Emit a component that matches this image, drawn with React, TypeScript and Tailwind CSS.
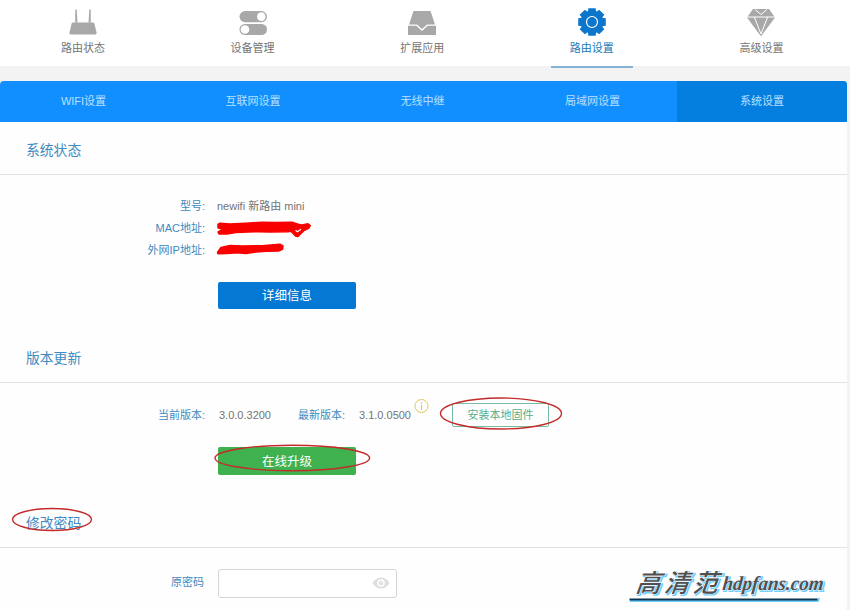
import type { ReactNode } from "react";
import clsx from "clsx";

const mainMenu = [
  { label: "路由状态", icon: <RouterIcon /> },
  { label: "设备管理", icon: <DevicesIcon /> },
  { label: "扩展应用", icon: <AppsIcon /> },
  { label: "路由设置", icon: <GearIcon />, active: true },
  { label: "高级设置", icon: <DiamondIcon /> },
];

const tabs = ["WIFI设置", "互联网设置", "无线中继", "局域网设置", "系统设置"];

function RouterIcon() {
  return (
    <svg width="30" height="30" viewBox="0 0 30 30" fill="#a8a8a8">
      <path d="M7.300 2.500h1.400l.8 13H7.200zM21.300 2.500h1.400l.1 13h-2.300z" />
      <path d="M5 15.500h20q1 0 1.300 1.100l2.300 9.200q.3 1.700-1.400 1.700H2.800q-1.700 0-1.400-1.700l2.300-9.200Q4 15.500 5 15.500z" />
    </svg>
  );
}

function DevicesIcon() {
  return (
    <svg width="30" height="30" viewBox="0 0 30 30" fill="#a8a8a8">
      <rect x="1.5" y="4" width="27.5" height="11.200" rx="5.600" />
      <rect x="1.5" y="17" width="27.5" height="11" rx="5.500" />
      <circle cx="23.300" cy="9.600" r="4.300" fill="#fff" />
      <circle cx="7" cy="22.500" r="4.300" fill="#fff" />
    </svg>
  );
}

function AppsIcon() {
  return (
    <svg width="30" height="30" viewBox="0 0 30 30" fill="#a8a8a8">
      <path d="M6.500 4h17l4.500 13.500h-8L15 22l-5-4.500H2z" />
      <path d="M1 18.800h8.300l5.700 5.200 5.700-5.200H29v9.200H1z" />
    </svg>
  );
}

function GearIcon() {
  return (
    <svg width="30" height="30" viewBox="0 0 30 30" fill="#0c76cc">
      <circle cx="15" cy="15" r="11.400" />
      {[0, 45, 90, 135, 180, 225, 270, 315].map((angle) => (
        <path key={angle} d="M11.300 1.200h7.400l.5 5h-8.400z" transform={`rotate(${angle} 15 15)`} />
      ))}
      <circle cx="15" cy="15" r="5.500" fill="none" stroke="#fff" strokeWidth="1.200" />
    </svg>
  );
}

function DiamondIcon() {
  return (
    <svg width="30" height="30" viewBox="0 0 30 30">
      <path d="M7 2h16l6 8.500-13.200 17.800q-.8 1-1.600 0L1 10.500z" fill="#a8a8a8" />
      <path
        d="M1 10h28M9 2.500l6 5 6-5M8.300 10l6.700 17 6.700-17"
        fill="none"
        stroke="#fff"
        strokeWidth="1"
      />
    </svg>
  );
}

function EyeIcon() {
  return (
    <svg className="mb-px" width="18" height="12" viewBox="0 0 18 12">
      <path d="M.5 6Q4 .5 9 .5T17.500 6Q14 11.500 9 11.500T.5 6z" fill="#dedede" />
      <circle cx="9" cy="6" r="3.800" fill="#fff" />
      <circle cx="9" cy="6" r="2.300" fill="#dedede" />
      <circle cx="9.500" cy="5.500" r=".8" fill="#fff" />
    </svg>
  );
}

function SectionTitle({ children }: { children: ReactNode }) {
  return (
    <h2 className="h-[53px] border-b border-[#e2e2e2] pl-[26px] text-[13.8px] leading-[58px] text-[#3f8abf]">
      {children}
    </h2>
  );
}

function Row({ label, children }: { label: string; children?: ReactNode }) {
  return (
    <div className="flex h-[22px] items-center">
      <span className="w-[205px] text-right text-[#3f8abf]">{label}</span>
      <span className="ml-3">{children}</span>
    </div>
  );
}

// Hand-drawn marks that sit on top of the page
function Marks() {
  return (
    <svg className="pointer-events-none absolute left-0 top-0" width="850" height="610" fill="none">
      <g fill="#f90000" stroke="#f90000" strokeLinejoin="round">
        <path
          d="M218 224.500l2-1.300 10 .8 20-1 12-.8 14 .3 16-.3 7 2.300 3 .6 6-1.300 2.300 1.700-1.300 2.500-5 2.500-6 6-2.500-.6-4.500-4.700-3 .5-18 .3-12-.3-10 .3-12 .5-9 1.500h-8l-1-2 4-2.700-4-1.500z"
          strokeWidth="1.500"
        />
        <path
          d="M217.500 252.500l3.500-5 9-2 12 .5 20-.3 12-1 6-.5 3 1.700-.5 3.500-3.500 1.500-13 .3-10 .7-10 1.600-9-.8-10 .9-9 .1z"
          strokeWidth="1.500"
        />
      </g>
      <path d="M295.500 230.300l2 1.500 3.500-2.500" stroke="#fff" strokeWidth="1.200" />
      <g stroke="#c42a2a" strokeWidth="1.400">
        <ellipse cx="292.300" cy="458" rx="77.300" ry="12.800" />
        <ellipse cx="501" cy="413.500" rx="60.500" ry="15.500" />
        <ellipse cx="52" cy="519.500" rx="39.500" ry="11" />
      </g>
    </svg>
  );
}

function WatermarkText() {
  return (
    <>
      <text
        transform="translate(15 41.500) skewX(-20)"
        fontSize="25"
        textLength="82"
        fontWeight="500"
        fontFamily="'Noto Sans CJK SC', sans-serif"
      >
        高清范
      </text>
      <text
        transform="translate(102 39.500) skewX(-6)"
        fontSize="20"
        textLength="101"
        lengthAdjust="spacingAndGlyphs"
        fontStyle="italic"
        fontWeight="700"
        fontFamily="'Liberation Serif', serif"
      >
        hdpfans.com
      </text>
    </>
  );
}

function Watermark() {
  return (
    <svg className="pointer-events-none absolute left-[620px] top-[550px] overflow-visible" width="225" height="60">
      <g fill="#6fd0ff" stroke="#6fd0ff" strokeWidth="1.800" strokeLinejoin="round" transform="translate(1.200 1.200)" aria-hidden="true">
        <WatermarkText />
      </g>
      <g fill="#505050" stroke="#fff" strokeWidth="1" paintOrder="stroke">
        <WatermarkText />
      </g>
      <path d="M10 51h188l1-3" fill="none" stroke="#6fd0ff" strokeWidth="2" />
      <path d="M9.500 49.500h188" stroke="#0b3550" strokeWidth="2" />
    </svg>
  );
}

export default function App() {
  return (
    <div className="relative h-[610px] w-[850px] overflow-hidden bg-[#f3f3f3] font-['Liberation_Sans','Noto_Sans_CJK_SC',sans-serif] text-[11px] text-[#747474]">
      <nav className="h-[66px] bg-white">
        <div className="grid w-[848px] grid-cols-5">
          {mainMenu.map((item) => (
            <a
              key={item.label}
              className={clsx("flex h-[68px] w-[166px] flex-col items-center pt-[7px]", item.active && "text-[#2276b4]")}
            >
              {item.icon}
              <span className="mt-[3px] leading-4">{item.label}</span>
              {item.active && <span className="mt-auto h-[2px] w-[82px] bg-[#83b4d5]" />}
            </a>
          ))}
        </div>
      </nav>

      <div className="mt-[15px] grid h-[41px] w-[847px] grid-cols-[169px_170px_169px_169px_170px] overflow-hidden rounded-t-[4px] bg-[#118fff] text-center leading-[41px] text-[#b9e0ff]">
        {tabs.map((tab, i) => (
          <a key={tab} className={clsx(i < 3 && "pr-[2px]", i === 4 && "bg-[#047fe0]")}>
            {tab}
          </a>
        ))}
      </div>

      <main className="h-[488px] w-[847px] bg-[#fefefe]">
        <section className="h-[208px]">
          <SectionTitle>系统状态</SectionTitle>
          <div className="pt-5">
            <Row label="型号:">newifi 新路由 mini</Row>
            <Row label="MAC地址:" />
            <Row label="外网IP地址:" />
          </div>
          <button className="ml-[218px] mt-[21px] block h-[27px] w-[138px] rounded-[2px] bg-[#0478d2] pt-[2px] text-[12.5px] leading-[25px] text-white">
            详细信息
          </button>
        </section>

        <section className="h-[165px]">
          <SectionTitle>版本更新</SectionTitle>
          <div className="flex h-[64px] items-center">
            <span className="w-[205px] text-right text-[#3f8abf]">当前版本:</span>
            <span className="ml-[14px] w-[79px]">3.0.0.3200</span>
            <span className="w-[61px] text-[#3f8abf]">最新版本:</span>
            <span>3.1.0.0500</span>
            <svg className="-mt-[18px] ml-[3px]" width="15" height="15" fill="none" stroke="#e4c65a">
              <circle cx="7.500" cy="7" r="6.500" />
              <path d="M7.500 6v5M7.500 3.300v1.500" strokeWidth="1.200" />
            </svg>
            <button className="ml-[23px] h-[24px] w-[97px] rounded-[2px] border border-[#78bda4] text-[#54ae8c]">
              安装本地固件
            </button>
          </div>
          <button className="ml-[218px] block h-[28px] w-[138px] rounded-[2px] bg-[#3fb24f] pt-[2px] text-[12.5px] leading-[26px] text-white">
            在线升级
          </button>
        </section>

        <section>
          <SectionTitle>修改密码</SectionTitle>
          <label className="mt-[21px] flex items-center">
            <span className="w-[204px] pb-[2px] text-right text-[#3f8abf]">原密码</span>
            <span className="ml-[14px] flex h-[29px] w-[179px] items-center rounded-[3px] border border-[#d5d5d5] bg-white pr-[6px]">
              <input type="password" className="min-w-0 flex-1 px-2 outline-none" />
              <EyeIcon />
            </span>
          </label>
        </section>
      </main>

      <Marks />
      <Watermark />
    </div>
  );
}
